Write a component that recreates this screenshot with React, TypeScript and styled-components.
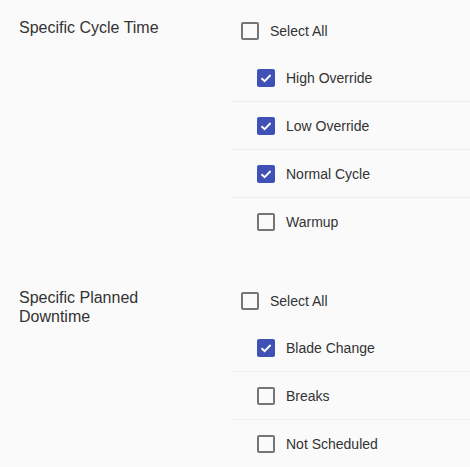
import React from "react";
import styled, {createGlobalStyle} from "styled-components";

const GlobalStyle = createGlobalStyle`
    html, body {
        margin: 0;
        padding: 0;
        background: #fafafa;
    }

    body {
        font-family: "Liberation Sans", Arial, sans-serif;
        color: #333;
    }
`;

const Page = styled.div`
    width: 470px;
    display: flex;
    flex-direction: column;
    gap: 24px;
`;

const Section = styled.div`
    display: grid;
    grid-template-columns: 230px 1fr;
`;

const Label = styled.div`
    padding: 18px 40px 0 19px;
    font-size: 16px;
    line-height: 19.2px;
    color: #333;
`;

const Options = styled.div`
    display: flex;
    flex-direction: column;
    padding-top: 8px;
`;

const Row = styled.label<{ $child?: boolean }>`
    display: flex;
    align-items: center;
    gap: 11px;
    box-sizing: border-box;
    height: ${p => p.$child ? 48 : 46}px;
    padding-left: ${p => p.$child ? 27 : 11}px;
    font-size: 14px;
    color: #333;
    cursor: pointer;
    border-bottom: 1px solid ${p => p.$child ? "#efefef" : "transparent"};

    &:last-child {
        border-bottom-color: transparent;
    }
`;

const Box = styled.span<{ $checked: boolean }>`
    box-sizing: border-box;
    width: 18px;
    height: 18px;
    flex: none;
    display: flex;
    align-items: center;
    justify-content: center;
    border-radius: 2px;
    border: ${p => p.$checked ? "none" : "2px solid #757575"};
    background: ${p => p.$checked ? "#3f51b5" : "transparent"};
`;

interface Option {
    label: string;
    checked: boolean;
}

interface Group {
    title: string;
    options: Option[];
}

const groups: Group[] = [
    {
        title: "Specific Cycle Time",
        options: [
            {label: "High Override", checked: true},
            {label: "Low Override", checked: true},
            {label: "Normal Cycle", checked: true},
            {label: "Warmup", checked: false},
        ],
    },
    {
        title: "Specific Planned Downtime",
        options: [
            {label: "Blade Change", checked: true},
            {label: "Breaks", checked: false},
            {label: "Not Scheduled", checked: false},
        ],
    },
];

const Checkbox = ({checked}: { checked: boolean }) => (
    <Box $checked={checked}>
        {checked && <svg width="14" height="14" viewBox="0 0 14 14">
            <polyline points="2.5,7.2 5.6,10.2 11.6,4" fill="none" stroke="#fff" strokeWidth="1.9"/>
        </svg>}
    </Box>
);

export default function App() {
    return (
        <>
            <GlobalStyle/>
            <Page>
                {groups.map(group => (
                    <Section key={group.title}>
                        <Label>{group.title}</Label>
                        <Options>
                            <Row>
                                <Checkbox checked={false}/>
                                Select All
                            </Row>
                            {group.options.map(option => (
                                <Row $child key={option.label}>
                                    <Checkbox checked={option.checked}/>
                                    {option.label}
                                </Row>
                            ))}
                        </Options>
                    </Section>
                ))}
            </Page>
        </>
    );
}
